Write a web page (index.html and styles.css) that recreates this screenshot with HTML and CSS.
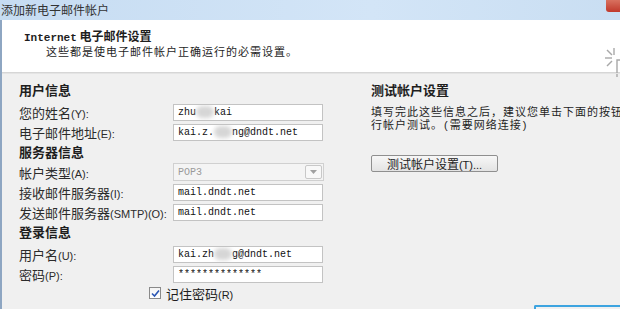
FILE: index.html
```html
<!DOCTYPE html>
<html lang="zh-CN">
<head>
    <meta charset="UTF-8">
    <title>添加新电子邮件帐户</title>
    <link rel="stylesheet" href="styles.css">
</head>
<body>

    <div class="titlebar">
        <span class="title">添加新电子邮件帐户</span>
        <span class="close"></span>
    </div>

    <div class="window">
        <div class="header">
            <div class="header-text">
                <div class="header-title"><span class="latin">Internet</span> 电子邮件设置</div>
                <div class="header-sub">这些都是使电子邮件帐户正确运行的必需设置。</div>
            </div>
            <svg class="header-icon" width="16" height="30" viewBox="0 0 16 30">
                <g stroke="#a8a8a8" stroke-width="1.4" fill="none">
                    <line x1="10" y1="1" x2="10" y2="8"/>
                    <line x1="3" y1="3" x2="8" y2="8"/>
                    <line x1="1" y1="11" x2="8" y2="11"/>
                    <line x1="3" y1="19" x2="8" y2="14"/>
                    <path d="M16 13 H13 V30"/>
                </g>
            </svg>
        </div>

        <div class="content">
            <div class="left">
                <div class="section">用户信息</div>
                <div class="row first">
                    <label>您的姓名<span class="key">(Y):</span></label>
                    <div class="field">zhu<span class="blur"></span>kai</div>
                </div>
                <div class="row">
                    <label>电子邮件地址<span class="key">(E):</span></label>
                    <div class="field">kai.z.<span class="blur"></span>ng@dndt.net</div>
                </div>
                <div class="section">服务器信息</div>
                <div class="row">
                    <label>帐户类型<span class="key">(A):</span></label>
                    <div class="field select">
                        <span>POP3</span>
                        <span class="drop">
                            <svg width="7" height="4" viewBox="0 0 7 4"><path d="M0 0 H7 L3.5 4 Z" fill="#a0a0a0"/></svg>
                        </span>
                    </div>
                </div>
                <div class="row">
                    <label>接收邮件服务器<span class="key">(I):</span></label>
                    <div class="field">mail.dndt.net</div>
                </div>
                <div class="row">
                    <label>发送邮件服务器<span class="key">(SMTP)(O):</span></label>
                    <div class="field">mail.dndt.net</div>
                </div>
                <div class="section">登录信息</div>
                <div class="row login">
                    <label>用户名<span class="key">(U):</span></label>
                    <div class="field">kai.zh<span class="blur"></span>g@dndt.net</div>
                </div>
                <div class="row">
                    <label>密码<span class="key">(P):</span></label>
                    <div class="field">**************</div>
                </div>
                <div class="remember">
                    <span class="checkbox">
                        <svg width="9" height="9" viewBox="0 0 9 9"><path d="M1 4.5 L3.5 7 L8 1.5" stroke="#2a56b4" stroke-width="1.6" fill="none"/></svg>
                    </span>
                    <span>记住密码<span class="key">(R)</span></span>
                </div>
            </div>

            <div class="right">
                <div class="section">测试帐户设置</div>
                <p class="note">填写完此这些信息之后，建议您单击下面的按钮进<br>行帐户测试。<span class="paren">(</span>需要网络连接<span class="paren">)</span></p>
                <button class="test-btn">测试帐户设置<span class="key">(T)...</span></button>
            </div>
        </div>

        <div class="footer">
            <span class="next-btn"></span>
        </div>
    </div>

</body>
</html>
```

FILE: styles.css
```css
body {
    margin: 0;
    width: 620px;
    height: 309px;
    overflow: hidden;
    font-family: "Noto Sans CJK SC", "DejaVu Sans", sans-serif;
    font-size: 12px;
    color: #1e1e1e;
    background-color: #f0f0f0;
}

.titlebar {
    height: 20px;
    display: flex;
    align-items: center;
    justify-content: space-between;
    background: linear-gradient(to right, #c6dcf2, #d3e5f7 60%, #c9def2);
    position: relative;
}

.title {
    padding-left: 1px;
    font-size: 12px;
    color: #333;
    line-height: 20px;
}

.close {
    position: absolute;
    right: 0;
    top: 0;
    width: 14px;
    height: 12px;
    background: linear-gradient(#d8715f, #c0392b);
    border-bottom-left-radius: 3px;
}

.window {
    border-left: 2px solid #8ea6c2;
    height: 289px;
    display: flex;
    flex-direction: column;
}

.header {
    height: 52px;
    background-color: #fff;
    border-bottom: 1px solid #d6d6d6;
    display: flex;
    justify-content: space-between;
    align-items: flex-start;
}

.header-text {
    padding: 9px 0 0 22px;
}

.header-title {
    font-weight: bold;
    font-size: 12px;
    line-height: 13px;
}

.latin {
    font-family: "Liberation Mono", monospace;
    font-size: 11px;
}

.header-sub {
    padding-left: 22px;
    margin-top: 1px;
    line-height: 11px;
    font-size: 11px;
    letter-spacing: 1px;
}

.header-icon {
    margin-top: 27px;
}

.content {
    display: flex;
    padding-top: 6px;
    height: 230px;
    border-top: 1px solid #e4e4e4;
}

.left {
    flex-shrink: 0;
    width: 335px;
    padding-left: 17px;
}

.section {
    font-weight: bold;
    font-size: 13px;
    height: 20px;
    line-height: 20px;
}

.row {
    display: flex;
    align-items: center;
    height: 20px;
}

.row.first {
    margin-top: 2px;
}

.row.login {
    margin-top: 2px;
}

.row label {
    width: 154px;
    flex-shrink: 0;
    font-size: 13px;
    color: #2b2b2b;
    white-space: nowrap;
}

.key {
    font-family: "Liberation Sans", sans-serif;
    font-size: 11px;
}

.field {
    width: 144px;
    height: 15px;
    border: 1px solid #c3c3c3;
    background-color: #fff;
    padding-left: 4px;
    font-family: "Liberation Mono", monospace;
    font-size: 10px;
    line-height: 15px;
    color: #111;
    white-space: nowrap;
    overflow: hidden;
}

.field.select {
    display: flex;
    justify-content: space-between;
    align-items: center;
    height: 16px;
    background-color: #f4f4f4;
    border-color: #d0d0d0;
    color: #9a9a9a;
    padding-right: 1px;
}

.drop {
    width: 15px;
    height: 12px;
    border: 1px solid #c8c8c8;
    border-radius: 2px;
    background-color: #f8f8f8;
    display: flex;
    align-items: center;
    justify-content: center;
}

.blur {
    display: inline-block;
    width: 18px;
    height: 12px;
    vertical-align: middle;
    background-color: #d6d6d6;
    border-radius: 6px;
    filter: blur(2px);
}

.remember {
    display: flex;
    align-items: center;
    gap: 5px;
    padding-left: 130px;
    height: 18px;
    font-size: 13px;
}

.checkbox {
    width: 10px;
    height: 10px;
    border: 1px solid #8a8a8a;
    background: linear-gradient(#f4f4f4, #ffffff);
    display: flex;
    align-items: center;
    justify-content: center;
}

.right {
    min-width: 0;
    padding-left: 17px;
    overflow: hidden;
}

.note {
    margin: 5px 0 0;
    font-size: 11px;
    line-height: 13px;
    letter-spacing: 1px;
    white-space: nowrap;
}

.paren {
    font-family: "Liberation Sans", sans-serif;
    padding: 0 1px;
}

.test-btn {
    margin-top: 23px;
    width: 127px;
    height: 17px;
    padding: 0;
    font-family: "Noto Sans CJK SC", sans-serif;
    font-size: 12px;
    line-height: 15px;
    border: 1px solid #8f8f8f;
    border-radius: 2px;
    background: linear-gradient(#f7f7f7, #e3e3e3);
    color: #222;
}

.footer {
    display: flex;
    justify-content: flex-end;
    padding-top: 3px;
}

.next-btn {
    width: 84px;
    height: 6px;
    border-top: 2px solid #3da4e0;
    border-left: 2px solid #3da4e0;
    border-top-left-radius: 2px;
}
```
